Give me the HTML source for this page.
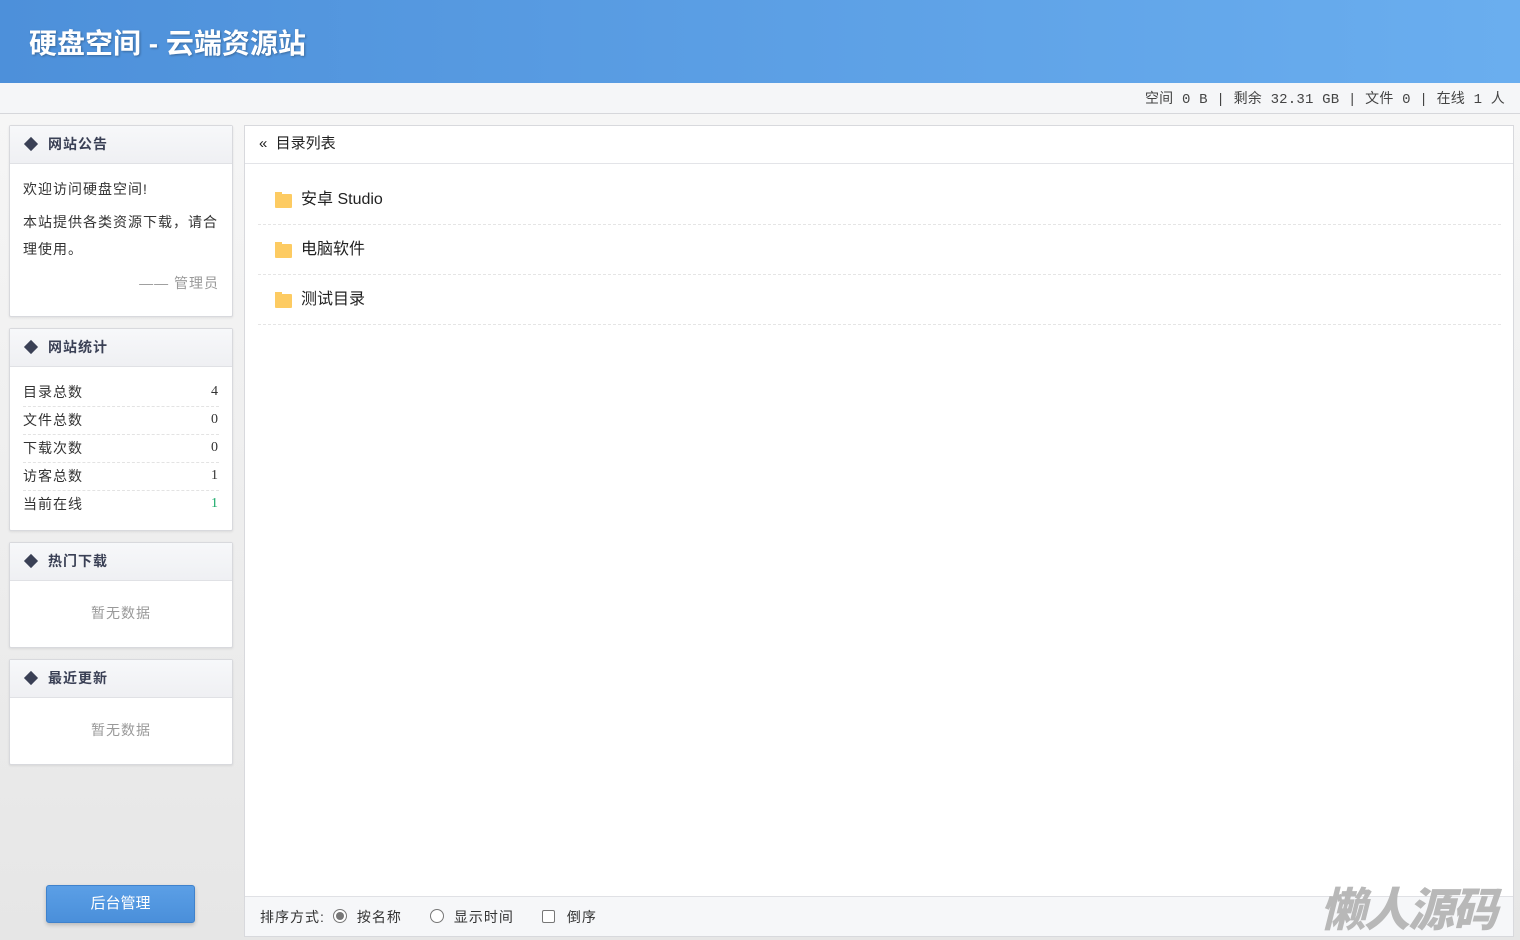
<!DOCTYPE html>
<html><head><meta charset="utf-8"><style>
*{margin:0;padding:0;box-sizing:border-box}
body{width:1520px;height:940px;overflow:hidden;font-family:"Liberation Sans","Noto Sans CJK SC",sans-serif;color:#333;background:linear-gradient(#f8f8f8,#e6e6e6);position:relative;font-size:14px}
.hd{position:absolute;left:0;top:0;width:1520px;height:83px;background:linear-gradient(90deg,#4d90da,#6aaeef)}
.hd h1{position:absolute;left:29px;top:22px;font-size:28px;color:#fff;font-weight:bold;letter-spacing:0px;text-shadow:1px 1px 2px rgba(0,0,0,.3)}
.sub{position:absolute;left:0;top:83px;width:1520px;height:31px;background:#f5f6f8;border-bottom:1px solid #d6d7db}
.sub span{position:absolute;right:15px;top:5px;font-size:14px;color:#444;font-family:"Liberation Mono","Noto Sans CJK SC",monospace;letter-spacing:0.2px}
.p{position:absolute;left:9px;width:224px;background:#fff;border:1px solid #d8d9dd;border-radius:2px;box-shadow:0 1px 2px rgba(0,0,0,.08)}
.ph{height:38px;background:linear-gradient(#f7f8fa,#eff0f3);border-bottom:1px solid #e0e1e5;font-weight:bold;color:#3a4055;font-size:14px;line-height:37px;padding-left:38px;position:relative;letter-spacing:1px}
.ph:before{content:"";position:absolute;left:16px;top:13px;width:10px;height:10px;background:#3a4055;transform:rotate(45deg)}
.pb{padding:10px 13px;font-size:14px;color:#333;letter-spacing:1px}
.row{display:flex;justify-content:space-between;height:28px;line-height:26px;border-bottom:1px dashed #e3e3e3}
.row:last-child{border:none}
.row b{font-weight:normal;font-family:"Liberation Serif",serif;font-size:14px}
.empty{text-align:center;color:#999;padding-top:22px;letter-spacing:1px}
.main{position:absolute;left:244px;top:125px;width:1270px;height:812px;background:#fff;border:1px solid #d8d9dd}
.mh{height:38px;border-bottom:1px solid #e3e4e8;line-height:36px;padding-left:14px;font-size:15px;color:#222}
.it{position:absolute;left:13px;width:1243px;height:50px;border-bottom:1px dashed #e5e5e5;font-size:16px;color:#222;line-height:50px;padding-left:43px}
.it:before{content:"";position:absolute;left:17px;top:19px;width:17px;height:14px;background:#fdcb62;border-radius:1px}
.it:after{content:"";position:absolute;left:17px;top:17px;width:7px;height:3px;background:#fdcb62}
.ft{position:absolute;left:0;bottom:0;width:100%;height:40px;background:#f6f7f9;border-top:1px solid #e0e1e5;font-size:14px;color:#333;line-height:40px;padding-left:15px;letter-spacing:1px}
.rad{display:inline-block;width:14px;height:14px;border:1px solid #777;border-radius:50%;vertical-align:-1px;margin:0 10px 0 8px;position:relative;background:#fff}
.rad.on:after{content:"";position:absolute;left:2px;top:2px;width:8px;height:8px;background:#777;border-radius:50%}
.chk{display:inline-block;width:13px;height:13px;border:1px solid #777;border-radius:2px;vertical-align:-1px;margin:0 12px 0 8px;background:#fff}
.btn{position:absolute;left:46px;top:885px;width:149px;height:38px;background:linear-gradient(#5b9fe6,#4a8fda);border:1px solid #3f82cc;border-radius:3px;color:#fff;text-align:center;line-height:36px;font-size:15px;box-shadow:0 2px 4px rgba(0,0,0,.2)}
.wm{position:absolute;left:1320px;top:874px;font-size:46px;font-weight:900;font-style:italic;color:#b8b8b8;letter-spacing:-2px}
</style></head><body>
<div class="hd"><h1>硬盘空间 - 云端资源站</h1></div>
<div class="sub"><span>空间 0 B | 剩余 32.31 GB | 文件 0 | 在线 1 人</span></div>
<div class="p" style="top:125px;height:192px"><div class="ph">网站公告</div>
<div class="pb" style="line-height:27px;padding-top:12px">欢迎访问硬盘空间!<br><div style="margin-top:6px">本站提供各类资源下载，请合理使用。</div><div style="text-align:right;color:#999;margin-top:7px">—— 管理员</div></div></div>
<div class="p" style="top:328px;height:203px"><div class="ph">网站统计</div>
<div class="pb" style="padding-top:12px"><div class="row"><span>目录总数</span><b>4</b></div><div class="row"><span>文件总数</span><b>0</b></div><div class="row"><span>下载次数</span><b>0</b></div><div class="row"><span>访客总数</span><b>1</b></div><div class="row"><span>当前在线</span><b style="color:#1aaa6a">1</b></div></div></div>
<div class="p" style="top:542px;height:106px"><div class="ph">热门下载</div><div class="empty">暂无数据</div></div>
<div class="p" style="top:659px;height:106px"><div class="ph">最近更新</div><div class="empty">暂无数据</div></div>
<div class="btn">后台管理</div>
<div class="main"><div class="mh">« &nbsp;目录列表</div>
<div class="it" style="top:49px">安卓 Studio</div>
<div class="it" style="top:99px">电脑软件</div>
<div class="it" style="top:149px">测试目录</div>
<div class="ft">排序方式:<span class="rad on"></span>按名称<span style="display:inline-block;width:20px"></span><span class="rad"></span>显示时间<span style="display:inline-block;width:20px"></span><span class="chk"></span>倒序</div>
</div>
<div class="wm">懒人源码</div>
</body></html>
